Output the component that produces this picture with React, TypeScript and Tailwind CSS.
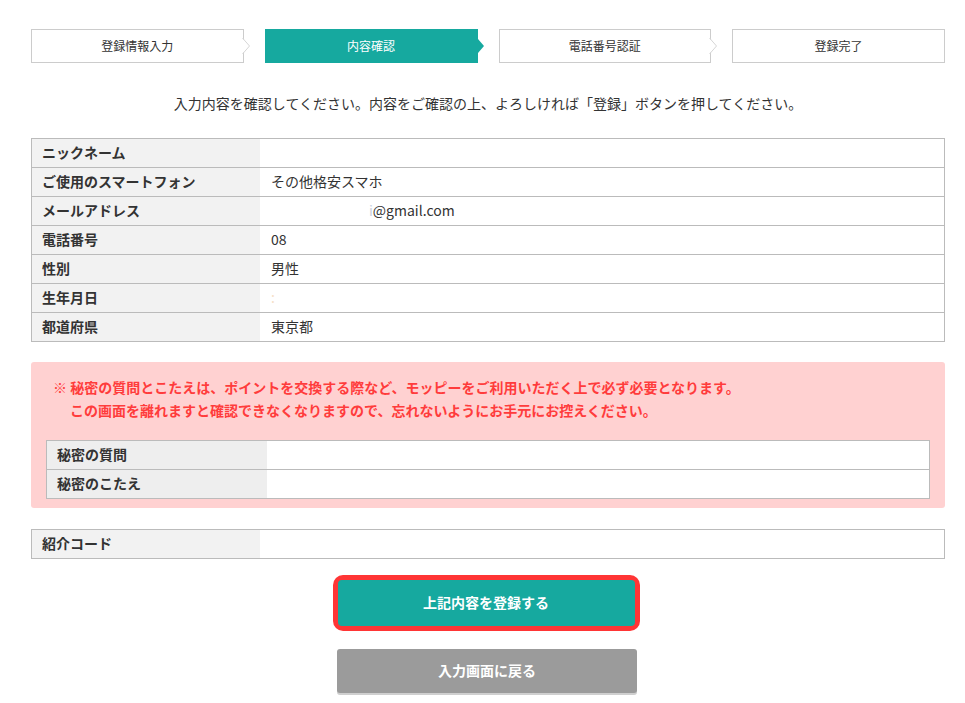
import React from "react"

const font = { fontFamily: '"Noto Sans CJK JP", "Noto Sans", sans-serif' }

const steps = ["登録情報入力", "内容確認", "電話番号認証", "登録完了"]

const mainRows: [string, React.ReactNode][] = [
  ["ニックネーム", ""],
  ["ご使用のスマートフォン", "その他格安スマホ"],
  [
    "メールアドレス",
    <span className="ml-[98px]">
      <span className="text-[#c8d0dc]">i</span>@gmail.com
    </span>,
  ],
  ["電話番号", "08"],
  ["性別", "男性"],
  ["生年月日", <span className="text-[#f6e0c8]">:</span>],
  ["都道府県", "東京都"],
]

function StepBar() {
  return (
    <div className="flex gap-[21px]">
      {steps.map((s, i) => {
        const active = i === 1
        return (
          <div
            key={s}
            className={
              "relative flex h-[34px] w-[213px] items-center justify-center text-[12px] " +
              (active ? "bg-[#16a99f] text-white" : "border border-[#cccccc] bg-white text-[#333333]")
            }
          >
            {s}
            {i === 0 || i === 2 ? (
              <svg
                className="absolute right-[-8px] top-[8px]"
                width="9"
                height="16"
                viewBox="0 0 9 16"
              >
                <polygon points="0,0 7.5,8 0,16" fill="#ffffff" />
                <polyline points="0.5,0 7.5,8 0.5,16" fill="none" stroke="#d6d6d6" strokeWidth="1" />
              </svg>
            ) : null}
            {active ? (
              <svg
                className="absolute right-[-6px] top-[10px]"
                width="6"
                height="14"
                viewBox="0 0 6 14"
              >
                <polygon points="0,0 6,7 0,14" fill="#16a99f" />
              </svg>
            ) : null}
          </div>
        )
      })}
    </div>
  )
}

function InfoTable({
  rows,
  labelWidth,
  labelBg,
}: {
  rows: [string, React.ReactNode][]
  labelWidth: string
  labelBg: string
}) {
  return (
    <div className="border border-[#bbbbbb] bg-white">
      {rows.map(([label, value], i) => (
        <div key={label} className={"flex " + (i > 0 ? "h-[29px] border-t border-[#bbbbbb]" : "h-[28px]")}>
          <div
            className={
              "flex items-center pb-[2px] pl-[10px] text-[14px] font-bold text-[#333333] " +
              labelWidth +
              " " +
              labelBg
            }
          >
            {label}
          </div>
          <div className="flex flex-1 items-center pb-[2px] pl-[11px] text-[14px] text-[#333333]">{value}</div>
        </div>
      ))}
    </div>
  )
}

export default function App() {
  return (
    <div className="min-h-[703px] bg-white" style={font}>
      <div className="ml-[31px] w-[914px] pt-[29px]">
        <StepBar />

        <p className="mt-[30px] text-center text-[14px] leading-[21px] text-[#333333]">
          入力内容を確認してください。内容をご確認の上、よろしければ「登録」ボタンを押してください。
        </p>

        <div className="mt-[24px]">
          <InfoTable rows={mainRows} labelWidth="w-[228px]" labelBg="bg-[#f2f2f2]" />
        </div>

        <div className="mt-[20px] rounded-[3px] bg-[#ffd1d1] px-[15px] pb-[9px] pt-[14px]">
          <div className="pl-[7px] text-[14px] font-bold leading-[23px] text-[#ff3c3c]">
            <p>※ 秘密の質問とこたえは、ポイントを交換する際など、モッピーをご利用いただく上で必ず必要となります。</p>
            <p className="pl-[17px]">この画面を離れますと確認できなくなりますので、忘れないようにお手元にお控えください。</p>
          </div>
          <div className="mt-[18px]">
            <InfoTable
              rows={[
                ["秘密の質問", ""],
                ["秘密のこたえ", ""],
              ]}
              labelWidth="w-[220px]"
              labelBg="bg-[#eeeeee]"
            />
          </div>
        </div>

        <div className="mt-[21px]">
          <InfoTable rows={[["紹介コード", ""]]} labelWidth="w-[228px]" labelBg="bg-[#f2f2f2]" />
        </div>

        <div className="mt-[16px] flex flex-col items-center">
          <div className="mr-[4px] rounded-[10px] bg-[#ff3535] p-[5px]">
            <button className="flex h-[46px] w-[297px] items-center justify-center rounded-[4px] bg-[#16a99f] pb-[2px] text-[14px] font-bold text-white">
              上記内容を登録する
            </button>
          </div>
          <button className="mt-[18px] mr-[2px] flex h-[44px] w-[300px] items-center justify-center rounded-[3px] bg-[#9b9b9b] pb-[2px] text-[14px] font-bold text-white shadow-[0_2px_0_#cfcfcf]">
            入力画面に戻る
          </button>
        </div>
      </div>
    </div>
  )
}
